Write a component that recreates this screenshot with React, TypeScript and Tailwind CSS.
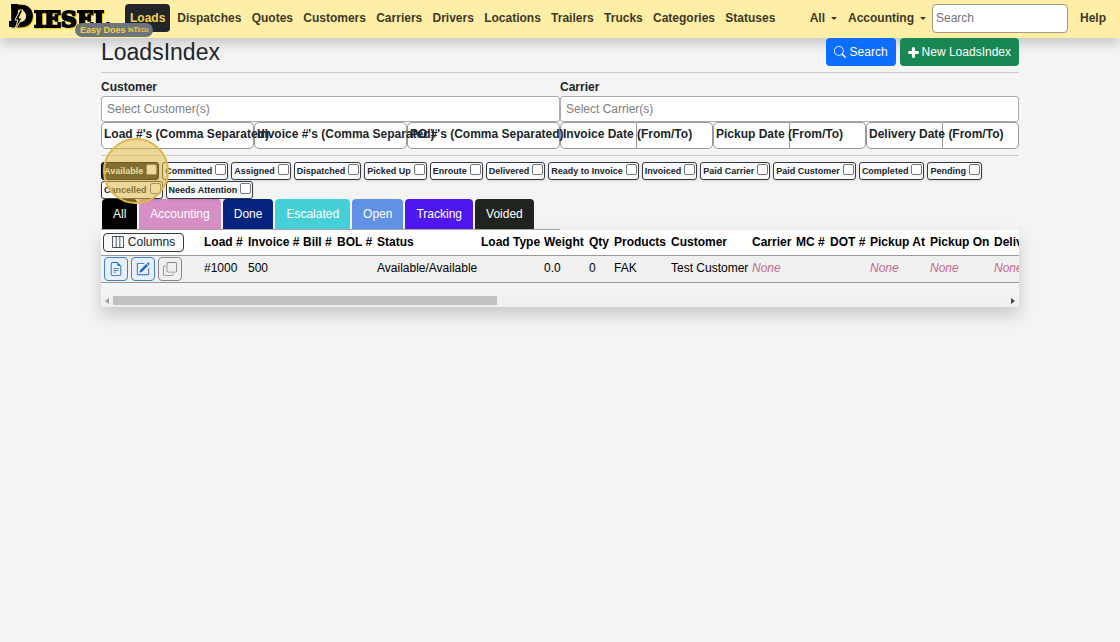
import React, { useState } from 'react';
import { BsSearch, BsLayoutThreeColumns, BsFileEarmarkText, BsPencilSquare, BsCopy } from 'react-icons/bs';
import { FaPlus } from 'react-icons/fa';

const navLinks = ['Dispatches', 'Quotes', 'Customers', 'Carriers', 'Drivers', 'Locations', 'Trailers', 'Trucks', 'Categories', 'Statuses'];

const numberFilters = ["Load #'s (Comma Separated)", "Invoice #'s (Comma Separated)", "PO #'s (Comma Separated)"];
const dateFilters = ['Invoice Date (From/To)', 'Pickup Date (From/To)', 'Delivery Date (From/To)'];

const statuses = [
  'Available', 'Committed', 'Assigned', 'Dispatched', 'Picked Up', 'Enroute', 'Delivered', 'Ready to Invoice',
  'Invoiced', 'Paid Carrier', 'Paid Customer', 'Completed', 'Pending', 'Cancelled', 'Needs Attention',
];

const tabs = [
  { name: 'All', color: 'bg-black' },
  { name: 'Accounting', color: 'bg-[#d68fc4]' },
  { name: 'Done', color: 'bg-[#05247f]' },
  { name: 'Escalated', color: 'bg-[#45d0d8]' },
  { name: 'Open', color: 'bg-[#6191e5]' },
  { name: 'Tracking', color: 'bg-[#4f17f0]' },
  { name: 'Voided', color: 'bg-[#20241e]' },
];

const columns = [
  { name: 'Load #', width: 'w-[44px]', value: '#1000' },
  { name: 'Invoice #', width: 'w-[55px]', value: '500' },
  { name: 'Bill #', width: 'w-[34px]', value: '' },
  { name: 'BOL #', width: 'w-[40px]', value: '' },
  { name: 'Status', width: 'w-[104px]', value: 'Available/Available' },
  { name: 'Load Type', width: 'w-[63px]', value: '' },
  { name: 'Weight', width: 'w-[45px]', value: '0.0' },
  { name: 'Qty', width: 'w-[25px]', value: '0' },
  { name: 'Products', width: 'w-[57px]', value: 'FAK' },
  { name: 'Customer', width: 'w-[81px]', value: 'Test Customer' },
  { name: 'Carrier', width: 'w-[44px]', value: null },
  { name: 'MC #', width: 'w-[34px]', value: '' },
  { name: 'DOT #', width: 'w-[40px]', value: '' },
  { name: 'Pickup At', width: 'w-[60px]', value: null },
  { name: 'Pickup On', width: 'w-[64px]', value: null },
  { name: 'Delivery At', width: 'w-[70px]', value: null },
];

const Logo: React.FC = () => (
  <a href="#" className="relative flex h-[37px] w-[125px] shrink-0 items-start pl-2">
    <svg width="110" height="34" viewBox="0 0 110 34" className="overflow-visible" aria-label="Diesel">
      <g fill="#000" stroke="#000" strokeWidth="1" fontWeight="700" className="[filter:drop-shadow(1px_1px_0_#f5d21f)]">
        <text x="1" y="27" fontSize="30" fontFamily="'DejaVu Sans', sans-serif">D</text>
        <text x="26" y="27" fontSize="22" strokeWidth="2" fontFamily="'DejaVu Serif', serif">IESEL</text>
      </g>
      <path d="M3 4h7v5H3zM1 21h6v6H1z" fill="#000" />
      <path d="M12 10L7 20h3L6 32l8-14h-3l4-8z" fill="#000" stroke="#ffeea6" strokeWidth="1" />
    </svg>
    <span className="absolute top-[23px] left-[75px] z-10 flex h-[14px] items-center rounded-full bg-[#6c757d] px-[5px] text-[9px] font-bold whitespace-pre text-[#f5cf3c]">
      Easy Does <span className="text-[7px] [font-variant:small-caps]">InTech</span>
    </span>
  </a>
);

const NavDropdown: React.FC<{ label: string }> = ({ label }) => (
  <button className="flex items-center gap-[6px] px-[5px] font-bold">
    {label}
    <span className="border-x-[3px] border-t-[3px] border-x-transparent border-t-[#3d3926]" />
  </button>
);

const App: React.FC = () => {
  const [checked, setChecked] = useState<string[]>([]);

  const toggle = (status: string) => {
    setChecked(checked.includes(status) ? checked.filter(s => s !== status) : [...checked, status]);
  };

  return (
    <div className="min-h-screen bg-[#f4f4f4] font-['Liberation_Sans',Arial,sans-serif] text-[12px] leading-[18px] text-[#212529]">
      <nav className="flex h-[38px] items-center bg-[#ffeea6] pr-[9px] pb-[2px] font-bold text-[#3d3926] shadow-[0_6px_12px_rgba(0,0,0,0.18)]">
        <Logo />
        <a href="#" className="rounded-[4px] bg-[#212529] px-[5px] py-[5px] text-[#f5d24b]">Loads</a>
        <div className="ml-[2px] flex max-w-[608px] flex-1 justify-between">
          {navLinks.map(link => (
            <a key={link} href="#" className="px-[5px]">{link}</a>
          ))}
        </div>
        <div className="ml-auto flex items-center gap-px">
          <NavDropdown label="All" />
          <NavDropdown label="Accounting" />
          <input
            type="search"
            aria-label="Search"
            placeholder="Search"
            className="h-[29px] w-[136px] rounded-[4px] border border-[#a39c7c] bg-white px-[3px] font-normal placeholder:text-[#757575]"
          />
          <a href="#" className="pr-[5px] pl-[11px]">Help</a>
        </div>
      </nav>

      <main className="mx-auto w-full max-w-[918px]">
        <header className="flex h-[35px] items-start justify-between border-b border-[#cacaca]">
          <h1 className="text-[23px] leading-[28px]">LoadsIndex</h1>
          <div className="flex gap-1 text-white">
            <button className="flex h-[28px] items-center gap-1 rounded-[4px] bg-[#0d6efd] px-2">
              <BsSearch size={12} />
              Search
            </button>
            <button className="flex h-[28px] items-center gap-[3px] rounded-[4px] bg-[#198754] px-2">
              <FaPlus size={11} stroke="currentColor" strokeWidth={50} />
              New LoadsIndex
            </button>
          </div>
        </header>

        {/* Filters */}
        <section className="border-b border-[#cacaca] pt-[5px] pb-[6px]">
          <div className="grid grid-cols-2">
            {['Customer', 'Carrier'].map(name => (
              <label key={name} className="font-bold">
                {name}
                <input
                  type="text"
                  placeholder={`Select ${name}(s)`}
                  className="block h-[26px] w-full rounded-[3px] border border-[#aaa] bg-white px-[5px] font-normal placeholder:text-[#808080]"
                />
              </label>
            ))}
          </div>
          <div className="grid grid-cols-6">
            {numberFilters.map(name => (
              <label key={name} className="relative">
                <input type="text" className="block h-[27px] w-full rounded-[5px] border border-[#999] bg-white px-1" />
                <span className="absolute top-[3px] left-[3px] z-10 font-bold whitespace-nowrap">{name}</span>
              </label>
            ))}
            {dateFilters.map(name => (
              <div key={name} className="relative flex">
                <input type="text" aria-label={`${name} from`} className="h-[27px] w-1/2 rounded-l-[5px] border border-[#999] bg-white px-1" />
                <input type="text" aria-label={`${name} to`} className="h-[27px] w-1/2 rounded-r-[5px] border border-l-0 border-[#999] bg-white px-1" />
                <span className="absolute top-[3px] left-[3px] z-10 font-bold whitespace-nowrap">{name}</span>
              </div>
            ))}
          </div>
        </section>

        {/* Status chips */}
        <section className="flex flex-wrap gap-x-[3px] gap-y-px pt-[6px] text-[9px] font-bold">
          {statuses.map(status => (
            <label
              key={status}
              className={`relative flex h-[18px] items-center gap-[3px] rounded-[3px] border pr-px pl-[2px] shadow-sm ${status === 'Available' ? 'border-black bg-[#212529] text-[#f8f9fa]' : 'border-[#343a40] bg-[#f8f9fa]'}`}
            >
              {status}
              <input
                type="checkbox"
                checked={checked.includes(status)}
                onChange={() => toggle(status)}
                className="mb-[3px] h-[11px] w-[11px] appearance-none rounded-[2px] border border-[#767676] bg-white checked:bg-[#0d6efd]"
              />
              {status === 'Available' && (
                <span className="pointer-events-none absolute top-1/2 left-[34px] z-20 h-[66px] w-[66px] -translate-x-1/2 -translate-y-1/2 rounded-full border-2 border-[#dcb84c] bg-[#e2b73c]/50" />
              )}
            </label>
          ))}
        </section>

        {/* Tabs */}
        <div className="flex w-1/2 gap-[2px] border-b border-[#aaa] pl-px text-white [text-shadow:1px_1px_2px_#000]">
          {tabs.map(tab => (
            <button key={tab.name} className={`h-[30px] shrink-0 rounded-t-[4px] px-[11px] ${tab.color}`}>{tab.name}</button>
          ))}
        </div>

        {/* Loads table */}
        <section className="bg-[#f4f4f4] shadow-[0_8px_16px_rgba(0,0,0,0.18)]">
          <div className="overflow-hidden">
            <table className="w-max table-fixed border-collapse text-left whitespace-nowrap text-black">
              <thead className="bg-white">
                <tr className="h-[25px] border-b border-[#999]">
                  <th className="w-[103px] pl-[2px]">
                    <button className="flex h-[19px] w-[81px] items-center justify-center gap-1 rounded-[4px] border border-[#343a40] bg-[#f8f9fa] font-normal text-[#212529]">
                      <BsLayoutThreeColumns size={12} />
                      Columns
                    </button>
                  </th>
                  {columns.map(col => (
                    <th key={col.name} className={`p-0 ${col.width}`}>{col.name}</th>
                  ))}
                </tr>
              </thead>
              <tbody>
                <tr className="h-[27px] border-b border-[#999] bg-[#f0f0f0]">
                  <td className="p-0 pl-[3px]">
                    <div className="flex gap-[3px]">
                      <button aria-label="View" className="flex h-[24px] w-[24px] items-center justify-center rounded-[4px] border border-[#3f7fd6] bg-[#e6effa] text-[#1d63d1]">
                        <BsFileEarmarkText size={14} />
                      </button>
                      <button aria-label="Edit" className="flex h-[24px] w-[24px] items-center justify-center rounded-[4px] border border-[#3f7fd6] bg-[#e6effa] text-[#1d63d1]">
                        <BsPencilSquare size={14} />
                      </button>
                      <button aria-label="Copy" className="flex h-[24px] w-[24px] items-center justify-center rounded-[4px] border border-[#868686] text-[#868686]">
                        <BsCopy size={14} />
                      </button>
                    </div>
                  </td>
                  {columns.map(col => (
                    <td key={col.name} className="p-0 pb-[2px]">
                      {col.value === null ? <em className="text-[#c06b8b]">None</em> : col.value}
                    </td>
                  ))}
                </tr>
              </tbody>
            </table>
          </div>
          <div className="mt-3 flex h-[12px] items-center justify-between bg-[#f0f0f0] px-1">
            <span className="border-y-[3px] border-r-[4px] border-y-transparent border-r-[#999]" />
            <div className="mx-1 h-[9px] flex-1">
              <div className="h-full w-[43%] bg-[#c1c1c1]" />
            </div>
            <span className="border-y-[3px] border-l-[4px] border-y-transparent border-l-[#444]" />
          </div>
        </section>
      </main>
    </div>
  );
};

export default App;
